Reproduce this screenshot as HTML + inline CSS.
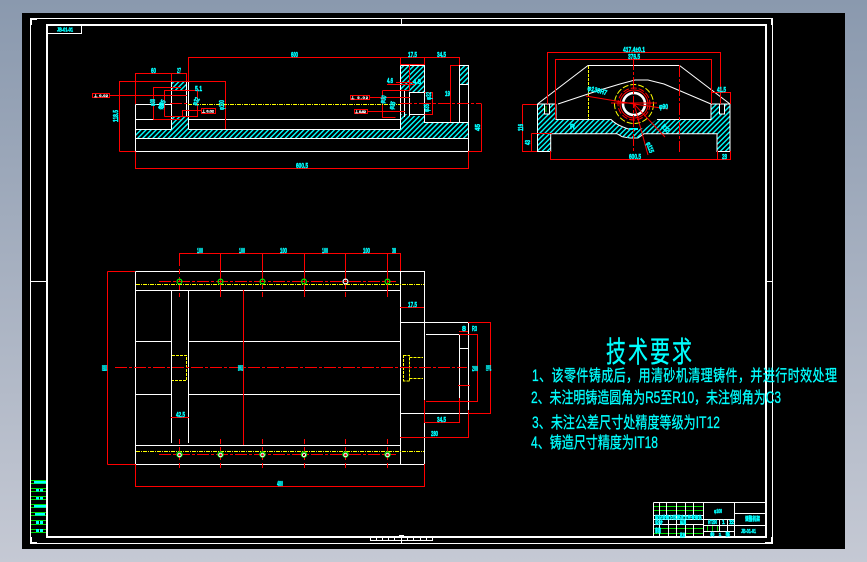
<!DOCTYPE html>
<html><head><meta charset="utf-8"><style>
html,body{margin:0;padding:0;background:#a8b1c0}
svg{display:block}
.t{font-family:"Liberation Sans","WenQuanYi Zen Hei","Noto Sans CJK SC",sans-serif;font-size:7px;font-weight:bold;fill:#00ffff;stroke:#00ffff;stroke-width:.45}
.c{font-family:"Liberation Sans","WenQuanYi Zen Hei","Noto Sans CJK SC",sans-serif;fill:#00ffff;stroke:#00ffff;stroke-width:.22}
.w{stroke:#fff;fill:none;stroke-width:1}
.r{stroke:#f00;fill:none;stroke-width:1}
.y{stroke:#ff0;fill:none;stroke-width:1;stroke-dasharray:4 1 1 1}
.g{stroke:#0d0;fill:none;stroke-width:1}
.d{stroke:#f00;fill:none;stroke-width:1;stroke-dasharray:12 2 3 2}
.k{font:bold 4px "Liberation Sans",sans-serif;fill:#fff;stroke:#fff;stroke-width:.3}
</style></head><body>
<svg width="867" height="562" viewBox="0 0 867 562" xmlns="http://www.w3.org/2000/svg">
<defs>
<linearGradient id="bg" x1="0" y1="0" x2="0" y2="1"><stop offset="0" stop-color="#8a99ae"/><stop offset="1" stop-color="#c5c9d4"/></linearGradient>
<pattern id="h" width="3.6" height="3.6" patternUnits="userSpaceOnUse" patternTransform="rotate(45)"><rect width="1.4" height="3.6" fill="#00ffff"/></pattern>
</defs>
<rect width="867" height="562" fill="url(#bg)"/>
<rect x="22" y="13" width="823" height="536" fill="#000"/>

<!-- frames -->
<g shape-rendering="crispEdges">
<path class="w" d="M30.5 18.5H772.5V543.5H30.5Z"/>
<rect x="46" y="24" width="720" height="2" fill="#fff"/><rect x="46" y="24" width="2" height="514" fill="#fff"/><rect x="46" y="536" width="721" height="2" fill="#fff"/><rect x="765" y="24" width="2" height="514" fill="#fff"/>
<rect x="30" y="18" width="7" height="2" fill="#fff"/><rect x="30" y="18" width="2" height="7" fill="#fff"/>
<rect x="30" y="537" width="2" height="7" fill="#fff"/><rect x="30" y="542" width="7" height="2" fill="#fff"/>
<rect x="771" y="537" width="2" height="7" fill="#fff"/><rect x="765" y="542" width="7" height="2" fill="#fff"/>
<rect x="771" y="18" width="2" height="7" fill="#fff"/>
<path class="w" d="M46.5 33.5H81.5V25M30 281.5H46M766 281.5H772M401.5 18V25"/>
<path class="w" d="M370.5 537V540.5H432.5V537M376.5 537V540M382.5 537V540M388.5 537V540M394.5 537V540M407.5 537V540M413.5 537V540M420.5 537V540M426.5 537V540M401.5 538V543"/>
<rect x="399" y="535" width="5" height="2" fill="#fff"/>

<!-- left strip -->
<path class="g" d="M31 480.5H46M31 483.5H46M31 488.5H46M31 491.5H46M31 496.5H46M31 499.5H46M31 504.5H46M31 507.5H46M31 512.5H46M31 515.5H46M31 520.5H46M31 524.5H46M31 529.5H46M31 532.5H46"/>
</g>
<rect x="34" y="481" width="12" height="2.5" fill="#0ff"/><rect x="36" y="489" width="3" height="2.5" fill="#0ff"/><rect x="40" y="489" width="3" height="2.5" fill="#0ff"/>
<rect x="36" y="497" width="3" height="2.5" fill="#0ff"/><rect x="40" y="497" width="3" height="2.5" fill="#0ff"/><rect x="34" y="505" width="12" height="2.5" fill="#0ff"/><rect x="35" y="513" width="10" height="2.5" fill="#0ff"/>
<rect x="36" y="521" width="3" height="3" fill="#0ff"/><rect x="40" y="521" width="3" height="3" fill="#0ff"/><rect x="36" y="529" width="3" height="3" fill="#0ff"/><rect x="40" y="529" width="3" height="3" fill="#0ff"/>
<text class="t" x="57" y="31.5" style="font-size:5px" textLength="16" lengthAdjust="spacingAndGlyphs">JB-01-01</text>

<!-- FRONT VIEW hatch -->
<path fill="url(#h)" d="M135 129H171V117H188V129H400V114H409V116H424V122H468V138H135Z"/>
<path fill="url(#h)" d="M172 81H186V90H172ZM400 65H424V92H409V90H400ZM459 65H468V84H459Z"/>
<g shape-rendering="crispEdges">
<path class="w" d="M135.5 104.5V151.5H468.5V65.5H459.5V122.5M135.5 104.5H171.5M135.5 119.5H171.5M188.5 119.5H400.5M135.5 129.5H171.5M188.5 129.5H400.5M135.5 138.5H468.5M459.5 84.5H468.5M171.5 81V129M186.5 81V117M188.5 81V129M400.5 65.5V129M400.5 65.5H424.5V122.5H468.5M404.5 90V117M409.5 92V116M409.5 92.5H424.5M409.5 114.5H424.5"/>
<path class="r" d="M188.5 81V57.5H459.5V65M135.5 152V168.5H468.5V152M119.5 151.5V81.5H225.5V129M119.5 151.5H135.5M135.5 104V73.5H186.5V81M171.5 73.5V81M153.5 119.5V87.5H181M153.5 119.5H181M164.5 116.5V90.5H197.5V116.5H164.5M92.5 93.5H109.5V97.5H92.5ZM109 95.5H187M201.5 108.5H215.5V113.5H201.5ZM182.5 117V110.5H201M350.5 95.5H369.5V99.5H350.5ZM369 97.5H410M354.5 109.5H367.5V113.5H354.5ZM367 111.5H405M382.5 90.5V117.5H395.5M382.5 90.5H409.5M424.5 92.5H432.5V114.5H424.5M450.5 122V65.5H459M481.5 103.5V151.5H468M400.5 57V65M424.5 57V65M400.5 64.5H424.5M409.5 65V90M387 84.5H415M396 82.5H417"/>
<path class="y" d="M188 104.5H400"/>
<path class="d" d="M170 103.5H188M400 103.5H481"/>
</g>
<text class="t" x="151" y="73" textLength="5" lengthAdjust="spacingAndGlyphs">60</text>
<text class="t" x="177" y="73" textLength="4" lengthAdjust="spacingAndGlyphs">27</text>
<text class="t" x="291" y="57" textLength="7" lengthAdjust="spacingAndGlyphs">600</text>
<text class="t" x="408" y="57" textLength="9" lengthAdjust="spacingAndGlyphs">17.5</text>
<text class="t" x="437" y="57" textLength="9" lengthAdjust="spacingAndGlyphs">34.5</text>
<text class="t" x="195" y="91" textLength="7" lengthAdjust="spacingAndGlyphs">5.1</text>
<text class="t" x="413" y="84" textLength="8" lengthAdjust="spacingAndGlyphs">4.8</text>
<text class="t" x="387" y="83" textLength="6" lengthAdjust="spacingAndGlyphs">4.6</text>
<text class="t" x="296" y="168" textLength="12" lengthAdjust="spacingAndGlyphs">600.5</text>
<text class="t" transform="translate(118,122) rotate(-90)" textLength="12" lengthAdjust="spacingAndGlyphs">118.5</text>
<text class="t" transform="translate(155,106) rotate(-90)" textLength="7" lengthAdjust="spacingAndGlyphs">φ30</text>
<text class="t" transform="translate(161,110) rotate(-60)" textLength="10" lengthAdjust="spacingAndGlyphs">φ35</text>
<text class="t" transform="translate(164,108) rotate(-90)" textLength="5" lengthAdjust="spacingAndGlyphs">20</text>
<text class="t" transform="translate(196,106) rotate(-60)" textLength="8" lengthAdjust="spacingAndGlyphs">φ32</text>
<text class="t" transform="translate(224,110) rotate(-90)" textLength="10" lengthAdjust="spacingAndGlyphs">φ100</text>
<text class="t" transform="translate(384,104) rotate(-70)" textLength="8" lengthAdjust="spacingAndGlyphs">φ30</text>
<text class="t" transform="translate(393,110) rotate(-70)" textLength="8" lengthAdjust="spacingAndGlyphs">φ35</text>
<text class="t" transform="translate(431,100) rotate(-90)" textLength="8" lengthAdjust="spacingAndGlyphs">φ32</text>
<text class="t" transform="translate(429,112) rotate(-90)" textLength="8" lengthAdjust="spacingAndGlyphs">φ35</text>
<text class="t" x="445" y="96" textLength="5" lengthAdjust="spacingAndGlyphs">19</text>
<text class="t" transform="translate(480,131) rotate(-90)" textLength="7" lengthAdjust="spacingAndGlyphs">45</text>
<text x="94" y="97" class="k" textLength="14">⊥ 0.02</text>
<text x="202" y="112.5" class="k" textLength="12">⊥ 0.02</text>
<text x="351" y="99" class="k" textLength="17">⊥ 0.02</text>
<text x="355" y="113" class="k" textLength="11">⊥ 0.02</text>

<!-- SIDE VIEW -->
<path fill="url(#h)" d="M538 104H556V119H611L621 127L633 130L647 127L657 119H711V104H730V151H717V134H644L638 138H630L622 137L617 134H551V151H538Z"/>
<rect x="544" y="104" width="5" height="10" fill="#000"/><rect x="719" y="104" width="5" height="10" fill="#000"/>
<path class="w" d="M537.5 104H556M537.5 104V151.5H550.7V133.7H617L622 136.7L630 138H638L644 133.7H717V151.5H730V104H711M556 104V119.5H611C615 124 622 127 630 129.5M657 119.5H711V104M537.5 104L588 65.5H679.5L730 104M558 104L600 90L620 84L635 80H648L664 84L711 104M544.5 104V114H549.5V104M719.5 104V114H724.5V104"/>
<circle cx="634" cy="104" r="11" fill="none" stroke="#fff" stroke-width="2.6"/>
<circle cx="634" cy="104" r="14" fill="none" stroke="#f00"/>
<circle cx="634" cy="104" r="16" fill="none" stroke="#f00" stroke-dasharray="6 2"/>
<circle cx="634" cy="104" r="19.5" fill="none" stroke="#ff0" stroke-dasharray="6 2"/>
<rect x="629" y="128" width="9" height="2" fill="#0ff"/><rect x="627" y="134" width="12" height="4" fill="url(#h)"/>
<g shape-rendering="crispEdges">
<path class="r" d="M547.5 104V52.5H720.5V104M555.5 119V59.5H711.5V104M522.5 104.5V151.5H537M522.5 104.5H537M531.5 133.5V151M531.5 133.5H552M550.5 151V159.5H730.5V151M717.5 151V159M711 92.5H730.5V104"/>
<path class="d" d="M633.5 58V152M679.5 65V152"/>
<path stroke="#ff0" stroke-dasharray="3 1" fill="none" d="M588.5 66V119"/>
</g>
<path class="r" d="M586 96L634 104M611 103H657M634 104L668 109M634 104L648 155M634 104L665 137"/>
<path stroke="#0c0" fill="none" d="M546 106V112"/>
<text class="t" x="623" y="52" textLength="22" lengthAdjust="spacingAndGlyphs">417.4±0.1</text>
<text class="t" x="628" y="59" textLength="12" lengthAdjust="spacingAndGlyphs">376.5</text>
<text class="t" x="717" y="92" textLength="9" lengthAdjust="spacingAndGlyphs">41.5</text>
<text class="t" x="629" y="159" textLength="12" lengthAdjust="spacingAndGlyphs">600.5</text>
<text class="t" x="722" y="159" textLength="5" lengthAdjust="spacingAndGlyphs">28</text>
<text class="t" x="570" y="129" textLength="5" lengthAdjust="spacingAndGlyphs">R</text>
<text class="t" transform="translate(523,131) rotate(-90)" textLength="7" lengthAdjust="spacingAndGlyphs">116</text>
<text class="t" transform="translate(530,145) rotate(-90)" textLength="5" lengthAdjust="spacingAndGlyphs">43</text>
<text class="t" transform="translate(587,90) rotate(15)" textLength="20" lengthAdjust="spacingAndGlyphs">φ130H7</text>
<text class="t" x="659" y="109" textLength="9" lengthAdjust="spacingAndGlyphs">φ90</text>
<text class="t" transform="translate(661,127) rotate(45)" textLength="8" lengthAdjust="spacingAndGlyphs">R12</text>
<text class="t" transform="translate(646,143) rotate(70)" textLength="11" lengthAdjust="spacingAndGlyphs">φ115</text>

<!-- PLAN VIEW -->
<g shape-rendering="crispEdges">
<path class="w" d="M135.5 271.5V464.5H424.5V315M135.5 271.5H424.5V322.5M135.5 290.5H400.5M135.5 341.5H171.5M188.5 341.5H400.5M135.5 394.5H171.5M188.5 394.5H400.5M135.5 445.5H400.5M400.5 271V464M400.5 322.5H468.5V413.5H400.5M171.5 291V443M188.5 291V443M426 334.5H459.5V401.5H426M459.5 334V401M459.5 348.5H468.5"/>
<path class="y" d="M136 284.5H424M136 451.5H424"/>
<path stroke="#ff0" fill="none" stroke-dasharray="3 1" d="M172 355.5H186.5V380.5H172M403.5 355V381M403.5 355.5H409.5V381M409.5 381H403M409.5 357.5H423M409.5 378.5H423"/>
<path class="r" d="M179.5 253.5H400.5V271M220.5 253V297M262.5 253V276M304.5 253V297M345.5 253V276M387.5 253V297M179.5 253V266M107.5 271.5V464.5M107.5 271.5H135M107.5 464.5H135M135.5 464V486.5H424.5V464M243.5 290V445M171 417.5H189M400 307.5H424M468 322.5H490.5V413.5H468M459 334.5H477.5V401.5H426M459 331.5H468M424.5 400V422.5H459.5V398M468.5 410V437.5H400"/>
<path stroke="#f00" fill="none" stroke-dasharray="5 3" d="M179.5 269V297M262.5 276V297M345.5 276V297M179.5 439V471M220.5 439V471M262.5 439V471M304.5 439V471M345.5 439V471M387.5 439V471"/>
<path class="d" d="M159 281.5H396M159 454.5H396M115 367.5H467M458 385.5H470"/>
</g>
<g fill="none" stroke="#0e0" stroke-width="1.2">
<circle cx="179.5" cy="281.5" r="2.4"/><circle cx="220.5" cy="281.5" r="2.4"/><circle cx="262.5" cy="281.5" r="2.4"/><circle cx="304" cy="281.5" r="2.4"/><circle cx="345.5" cy="281.5" r="2.4" stroke="#fff"/><circle cx="387.5" cy="281.5" r="2.4"/>
<circle cx="179.5" cy="454.5" r="2.6"/><circle cx="220.5" cy="454.5" r="2.6"/><circle cx="262.5" cy="454.5" r="2.6"/><circle cx="304" cy="454.5" r="2.6"/><circle cx="345.5" cy="454.5" r="2.6"/><circle cx="387.5" cy="454.5" r="2.6"/>
</g>
<g fill="none" stroke="#fff"><circle cx="179.5" cy="455" r="1.7"/><circle cx="220.5" cy="455" r="1.7"/><circle cx="262.5" cy="455" r="1.7"/><circle cx="304" cy="455" r="1.7"/><circle cx="345.5" cy="455" r="1.7"/><circle cx="387.5" cy="455" r="1.7"/></g>
<text class="t" x="197" y="253" textLength="6" lengthAdjust="spacingAndGlyphs">100</text>
<text class="t" x="239" y="253" textLength="6" lengthAdjust="spacingAndGlyphs">100</text>
<text class="t" x="280" y="253" textLength="7" lengthAdjust="spacingAndGlyphs">100</text>
<text class="t" x="322" y="253" textLength="6" lengthAdjust="spacingAndGlyphs">100</text>
<text class="t" x="363" y="253" textLength="7" lengthAdjust="spacingAndGlyphs">100</text>
<text class="t" x="392" y="253" textLength="4" lengthAdjust="spacingAndGlyphs">38</text>
<text class="t" transform="translate(107,371) rotate(-90)" textLength="6" lengthAdjust="spacingAndGlyphs">600</text>
<text class="t" transform="translate(243,371) rotate(-90)" textLength="6" lengthAdjust="spacingAndGlyphs">300</text>
<text class="t" x="176" y="417" textLength="9" lengthAdjust="spacingAndGlyphs">42.5</text>
<text class="t" x="277" y="486" textLength="6" lengthAdjust="spacingAndGlyphs">480</text>
<text class="t" x="408" y="307" textLength="9" lengthAdjust="spacingAndGlyphs">17.5</text>
<text class="t" x="437" y="422" textLength="9" lengthAdjust="spacingAndGlyphs">34.5</text>
<text class="t" x="431" y="436" textLength="7" lengthAdjust="spacingAndGlyphs">280</text>
<text class="t" x="462" y="331" textLength="4" lengthAdjust="spacingAndGlyphs">8</text>
<text class="t" x="472" y="331" textLength="5" lengthAdjust="spacingAndGlyphs">R3</text>
<text class="t" x="472" y="371" textLength="6" lengthAdjust="spacingAndGlyphs">200</text>
<text class="t" transform="translate(491,371) rotate(-90)" textLength="6" lengthAdjust="spacingAndGlyphs">100</text>

<!-- TECH TEXT -->
<g transform="translate(606,362) scale(1,1.45)"><text class="c" x="0" y="0" style="font-size:20px" textLength="86">技术要求</text></g>
<g transform="translate(532,381) scale(1,1.35)"><text class="c" x="0" y="0" style="font-size:12px" textLength="305" lengthAdjust="spacing">1、该零件铸成后，用清砂机清理铸件，并进行时效处理</text></g>
<g transform="translate(531,403) scale(1,1.35)"><text class="c" x="0" y="0" style="font-size:12px" textLength="250" lengthAdjust="spacing">2、未注明铸造圆角为R5至R10，未注倒角为C3</text></g>
<g transform="translate(532,428) scale(1,1.35)"><text class="c" x="0" y="0" style="font-size:12px" textLength="188" lengthAdjust="spacing">3、未注公差尺寸处精度等级为IT12</text></g>
<g transform="translate(531,448) scale(1,1.35)"><text class="c" x="0" y="0" style="font-size:12px" textLength="127" lengthAdjust="spacing">4、铸造尺寸精度为IT18</text></g>

<!-- TITLE BLOCK -->
<g shape-rendering="crispEdges">
<path class="g" d="M654 506.5H703M654 510.5H703M654 528.5H703M654 533.5H703M707.5 526V531M712.5 526V531M717.5 526V531"/>
<path class="w" d="M653.5 502.5H766V537M653.5 502.5V537M659.5 502V515M666.5 502V515M676.5 502V537M685.5 502V519M693.5 502V519M703.5 502V537M734.5 502V537M653.5 515.5H703M653.5 519.5H703M653.5 524.5H703M703.5 519.5H734M734.5 513.5H766M703.5 525.5H766M703.5 531.5H734M719.5 519V531M727.5 519V531M659.5 519V537M668.5 519V537M685.5 519V537M693.5 524V537"/>
</g>
<text class="t" x="714" y="513" style="font-size:5px" textLength="8" lengthAdjust="spacingAndGlyphs">φ100</text>
<text class="t" x="745" y="521" style="font-size:6px" textLength="15" lengthAdjust="spacingAndGlyphs">调整机架</text>
<text class="t" x="741" y="533" style="font-size:5px" textLength="15" lengthAdjust="spacingAndGlyphs">JB-01-01</text>
<text class="t" x="708" y="524" style="font-size:5px" textLength="9" lengthAdjust="spacingAndGlyphs">HT200</text>
<text class="t" x="722" y="524" style="font-size:5px" textLength="4">1</text>
<text class="t" x="729" y="524" style="font-size:5px" textLength="5">1:2</text>
<text class="t" x="655" y="519" style="font-size:4.5px" textLength="47" lengthAdjust="spacingAndGlyphs">标记处数分区更改文件号签名</text>
<text class="t" x="655" y="524" style="font-size:4.5px" textLength="8" lengthAdjust="spacingAndGlyphs">设计</text>
<text class="t" x="680" y="524" style="font-size:4.5px" textLength="6" lengthAdjust="spacingAndGlyphs">标准</text>
<text class="t" x="655" y="533" style="font-size:6px" textLength="6" lengthAdjust="spacingAndGlyphs">审核</text>
<text class="t" x="680" y="537" style="font-size:5px" textLength="5" lengthAdjust="spacingAndGlyphs">批准</text>
<text class="t" x="710" y="536" style="font-size:4.5px" textLength="20" lengthAdjust="spacing">共 1 张</text>
</svg>
</body></html>
